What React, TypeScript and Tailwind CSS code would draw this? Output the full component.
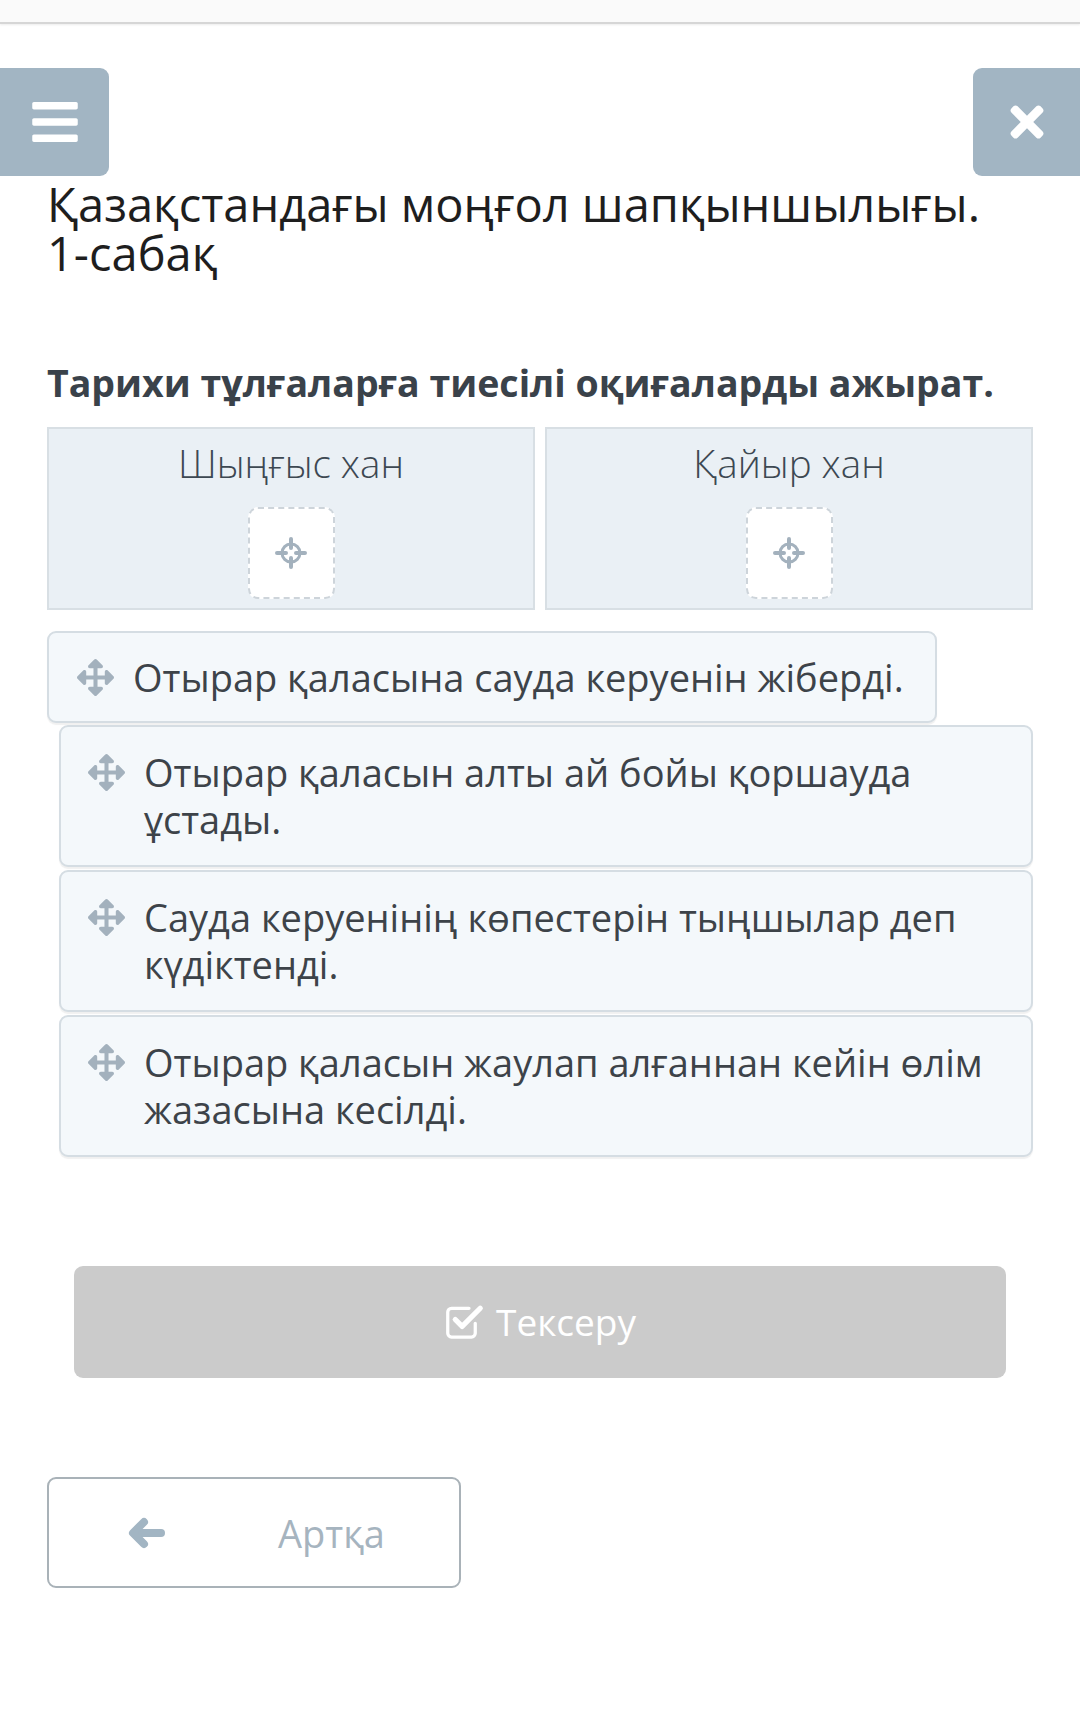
import { FaBars, FaTimes, FaArrowsAlt } from "react-icons/fa";

const zones = ["Шыңғыс хан", "Қайыр хан"];

const items = [
  { text: "Отырар қаласын алты ай бойы қоршауда ұстады." },
  { text: "Сауда керуенінің көпестерін тыңшылар деп күдіктенді." },
  { text: "Отырар қаласын жаулап алғаннан кейін өлім жазасына кесілді." },
];

function Crosshair() {
  return (
    <svg width="32" height="32" viewBox="0 0 32 32" fill="none" stroke="#a3b1bd">
      <circle cx="16" cy="16" r="9" strokeWidth="3" />
      <path d="M16 2v9M16 21v9M2 16h9M21 16h9" strokeWidth="4" strokeLinecap="round" />
    </svg>
  );
}

function CheckSquare() {
  return (
    <svg width="40" height="38" viewBox="0 0 32 30" fill="none" stroke="white" strokeLinecap="round" strokeLinejoin="round">
      <path d="M25 16v8a3 3 0 0 1-3 3H6a3 3 0 0 1-3-3V7a3 3 0 0 1 3-3h14" strokeWidth="2.6" />
      <path d="M9 13l5.5 5.5L29 4" strokeWidth="4.2" />
    </svg>
  );
}

function BackArrow() {
  return (
    <svg width="40" height="34" viewBox="0 0 40 34" fill="none" stroke="#a2b5c3" strokeLinecap="round" strokeLinejoin="round">
      <path d="M35 17H9" strokeWidth="8" />
      <path d="M18 6L7 17l11 11" strokeWidth="8" />
    </svg>
  );
}

export default function App() {
  return (
    <div className="w-[1080px] min-h-[1723px] bg-white font-['Open_Sans',sans-serif]">
      {/* top bar */}
      <div className="h-[24px] bg-[#fafafa] border-b-2 border-[#d6d6d6] shadow-[0_1px_2px_rgba(0,0,0,0.08)]" />

      {/* menu / close */}
      <div className="mt-[44px] flex justify-between">
        <button className="w-[109px] h-[108px] bg-[#a2b5c3] rounded-r-[9px] flex items-center justify-center">
          <FaBars size={52} color="white" />
        </button>
        <button className="w-[107px] h-[108px] bg-[#a2b5c3] rounded-l-[9px] flex items-center justify-center">
          <FaTimes size={48} color="white" />
        </button>
      </div>

      <div className="px-[47px]">
        <h1 className="mt-[4px] text-[47px] leading-[49px] text-[#1e1e1e] font-normal">
          Қазақстандағы моңғол шапқыншылығы.
          <br />
          1-сабақ
        </h1>

        <h2 className="mt-[81px] text-[37.5px] leading-[48px] font-bold text-[#3a424a]">
          Тарихи тұлғаларға тиесілі оқиғаларды ажырат.
        </h2>

        {/* drop zones */}
        <div className="mt-[20px] grid grid-cols-2 gap-[10px]">
          {zones.map((z) => (
            <div
              key={z}
              className="h-[183px] bg-[#eaf0f5] border-2 border-[#d8dfe4] flex flex-col items-center pt-[13px]"
            >
              <div className="text-[38.5px] leading-[42px] font-light text-[#3d4852]">{z}</div>
              <div className="mt-[23px] w-[87px] h-[92px] bg-white border-2 border-dashed border-[#cdd4da] rounded-[10px] flex items-center justify-center">
                <Crosshair />
              </div>
            </div>
          ))}
        </div>

        {/* draggable items */}
        <div className="mt-[21px] w-[890px] h-[92px] bg-[#f4f8fb] border-2 border-[#d5dde3] rounded-[9px] flex items-center pl-[28px] gap-[19px] shadow-[0_2px_1px_rgba(0,0,0,0.06)]">
          <FaArrowsAlt size={37} color="#a3b1bd" className="shrink-0" />
          <span className="text-[38px] leading-[47px] text-[#3d4349]">Отырар қаласына сауда керуенін жіберді.</span>
        </div>
        <div className="ml-[12px] flex flex-col gap-[3px] mt-[2px]">
          {items.map((it) => (
            <div
              key={it.text}
              className="h-[142px] bg-[#f4f8fb] border-2 border-[#d5dde3] rounded-[9px] flex items-start pl-[27px] pr-[30px] pt-[22px] gap-[19px] shadow-[0_2px_1px_rgba(0,0,0,0.06)]"
            >
              <FaArrowsAlt size={37} color="#a3b1bd" className="shrink-0 mt-[5px]" />
              <span className="text-[38px] leading-[47px] text-[#3d4349]">{it.text}</span>
            </div>
          ))}
        </div>

        {/* check */}
        <div className="mt-[109px] mx-[27px] h-[112px] bg-[#cbcbcb] rounded-[9px] flex items-center justify-center gap-[12px]">
          <CheckSquare />
          <span className="text-[37px] leading-[48px] text-white">Тексеру</span>
        </div>

        {/* back */}
        <div className="mt-[99px] w-[414px] h-[111px] border-2 border-[#a9b2b8] rounded-[9px] flex items-center pl-[77px]">
          <BackArrow />
          <span className="ml-[112px] text-[38px] leading-[46px] text-[#a6b4bf]">Артқа</span>
        </div>
      </div>
    </div>
  );
}
